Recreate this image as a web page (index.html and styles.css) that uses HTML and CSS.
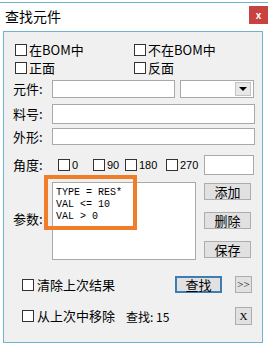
FILE: index.html
```
<!DOCTYPE html>
<html lang="zh-CN">
<head>
    <meta charset="UTF-8">
    <title>查找元件</title>
    <link rel="stylesheet" href="styles.css">
</head>
<body>
    <div class="titlebar">
        <span class="title">查找元件</span>
        <span class="close">x</span>
    </div>

    <div class="panel">
        <div class="checks">
            <label class="chk"><span class="box"></span>在BOM中</label>
            <label class="chk"><span class="box"></span>不在BOM中</label>
            <label class="chk"><span class="box"></span>正面</label>
            <label class="chk"><span class="box"></span>反面</label>
        </div>

        <div class="field row-part">
            <span class="lbl">元件:</span>
            <span class="input part-input"></span>
            <span class="select"><span class="drop"><span class="arrow"></span></span></span>
        </div>
        <div class="field row-num">
            <span class="lbl">料号:</span>
            <span class="input wide"></span>
        </div>
        <div class="field row-shape">
            <span class="lbl">外形:</span>
            <span class="input wide"></span>
        </div>

        <div class="field row-angle">
            <span class="lbl angle-lbl">角度:</span>
            <label class="ang a0"><span class="box"></span>0</label>
            <label class="ang a90"><span class="box"></span>90</label>
            <label class="ang a180"><span class="box"></span>180</label>
            <label class="ang a270"><span class="box"></span>270</label>
            <span class="input angle-input"></span>
        </div>

        <div class="field row-params">
            <span class="lbl">参数:</span>
            <div class="params">
                <div class="params-text">TYPE = RES*<br>VAL &lt;= 10<br>VAL &gt; 0</div>
                <div class="highlight"></div>
            </div>
            <div class="side-buttons">
                <span class="btn">添加</span>
                <span class="btn">删除</span>
                <span class="btn">保存</span>
            </div>
        </div>

        <div class="bottom row-clear">
            <label class="chk opt-clear"><span class="box"></span>清除上次结果</label>
            <span class="btn find">查找</span>
            <span class="btn small">&gt;&gt;</span>
        </div>
        <div class="bottom row-remove">
            <label class="chk opt-remove"><span class="box"></span>从上次中移除</label>
            <span class="count">查找: 15</span>
            <span class="btn small">X</span>
        </div>
    </div>
</body>
</html>
```

FILE: styles.css
```
:root {
    --panel-bg: #f0f0f0;
    --frame: #6fb3d2;
    --input-border: #a9a9a9;
    --button-bg: #e1e1e1;
    --button-border: #adadad;
    --accent: #f07d2a;
}

body {
    margin: 0;
    padding-top: 2px;
    width: 274px;
    height: 354px;
    background: #ffffff;
    color: #000000;
    font-family: "Noto Sans CJK SC", "Liberation Sans", sans-serif;
    font-size: 13px;
    overflow: hidden;
}

.titlebar {
    height: 28px;
    width: 268px;
    border-top: 1px solid var(--frame);
    display: flex;
    align-items: center;
    justify-content: space-between;
}

.title {
    margin-left: 5px;
    font-size: 14px;
    line-height: 16px;
    margin-top: -2px;
}

.close {
    width: 19px;
    height: 18px;
    margin-top: -4px;
    background: #c8433f;
    color: #ffffff;
    font-family: "Liberation Sans", sans-serif;
    font-size: 10px;
    font-weight: bold;
    display: flex;
    align-items: center;
    justify-content: center;
}

.panel {
    box-sizing: border-box;
    margin-left: 3px;
    width: 260px;
    height: 312px;
    border: 1px solid var(--frame);
    background: var(--panel-bg);
    padding-left: 9px;
}

.checks {
    display: grid;
    grid-template-columns: 119px auto;
    grid-auto-rows: 18px;
    padding-top: 9px;
    margin-left: 2px;
}

.chk {
    display: flex;
    align-items: center;
    font-size: 13px;
    line-height: 16px;
    white-space: nowrap;
}

.box {
    box-sizing: border-box;
    width: 12px;
    height: 12px;
    border: 1px solid #333333;
    background: #ffffff;
    margin-right: 2px;
    flex: none;
}

.field {
    display: flex;
    align-items: center;
}

.lbl {
    width: 39px;
    flex: none;
    font-size: 13px;
    line-height: 16px;
}

.input {
    box-sizing: border-box;
    display: block;
    height: 100%;
    border: 1px solid var(--input-border);
    background: #ffffff;
}

.row-part {
    margin-top: 3px;
    height: 18px;
}

.part-input {
    width: 123px;
}

.select {
    box-sizing: border-box;
    width: 74px;
    height: 18px;
    margin-left: 5px;
    border: 1px solid var(--input-border);
    background: #ffffff;
    display: flex;
    justify-content: flex-end;
    align-items: center;
    padding-right: 2px;
}

.drop {
    box-sizing: border-box;
    width: 16px;
    height: 14px;
    border: 1px solid #c4c4c4;
    background: #e8e8e8;
    display: flex;
    align-items: center;
    justify-content: center;
}

.arrow {
    width: 0;
    height: 0;
    border-left: 4px solid transparent;
    border-right: 4px solid transparent;
    border-top: 4px solid #000000;
}

.row-num {
    margin-top: 6px;
    height: 20px;
}

.row-shape {
    margin-top: 4px;
    height: 17px;
}

.wide {
    width: 203px;
}

.row-angle {
    margin-top: 10px;
    height: 20px;
}

.angle-lbl {
    width: 45px;
}

.ang {
    display: flex;
    align-items: center;
    font-family: "Liberation Sans", sans-serif;
    font-size: 11px;
    flex: none;
}

.a0 { width: 35px; }
.a90 { width: 32px; }
.a180 { width: 41px; }
.a270 { width: 38px; }

.angle-input {
    width: 50px;
}

.row-params {
    margin-top: 7px;
    height: 78px;
    align-items: stretch;
}

.row-params .lbl {
    align-self: center;
    margin-top: -4px;
}

.params {
    position: relative;
    box-sizing: border-box;
    width: 144px;
    height: 78px;
    border: 1px solid var(--input-border);
    background: #ffffff;
}

.params-text {
    padding: 4px 0 0 3px;
    font-family: "Liberation Mono", monospace;
    font-size: 10px;
    line-height: 12px;
}

.highlight {
    position: absolute;
    left: -9px;
    top: -8px;
    width: 93px;
    height: 55px;
    box-sizing: border-box;
    border: 4px solid var(--accent);
}

.side-buttons {
    margin-left: 8px;
    display: flex;
    flex-direction: column;
    gap: 12px;
    padding-top: 1px;
}

.btn {
    box-sizing: border-box;
    width: 47px;
    height: 17px;
    background: var(--button-bg);
    border: 1px solid var(--button-border);
    display: flex;
    align-items: center;
    justify-content: center;
    font-size: 13px;
    line-height: 15px;
}

.bottom {
    display: flex;
    align-items: center;
    margin-left: 9px;
}

.row-clear {
    margin-top: 16px;
    height: 17px;
}

.row-remove {
    margin-top: 14px;
    height: 18px;
}

.opt-clear {
    width: 153px;
}

.opt-remove {
    width: 104px;
}

.bottom .box {
    margin-right: 3px;
}

.btn.find {
    border: 2px solid #3d7db3;
}

.btn.small {
    width: 17px;
    margin-left: 13px;
    font-family: "Liberation Serif", serif;
    font-size: 11px;
}

.row-remove .btn.small {
    height: 18px;
    margin-left: 0;
}

.count {
    width: 109px;
    font-size: 12px;
}
```
